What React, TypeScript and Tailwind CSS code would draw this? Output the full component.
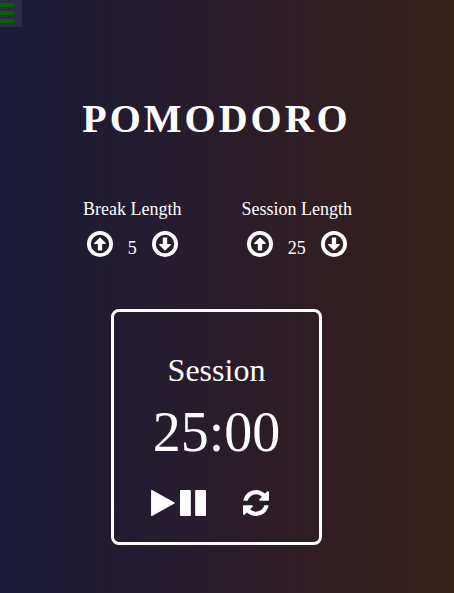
import { useEffect, useState } from "react";

const ICONS = {
  up: {
    box: "128 128 1536 1536",
    size: "w-[26px]",
    path: "M896 352a544 544 0 1 0 0 1088a544 544 0 0 0 0-1088zM896 128a768 768 0 1 1 0 1536a768 768 0 0 1 0-1536zM1248 864q0-14-10-24l-319-319q-10-9-23-9t-23 9l-320 320q-9 9-9 23 0 13 9.500 22.500t22.500 9.500h192v352q0 13 9.500 22.500t22.500 9.500h192q13 0 22.500-9.500t9.500-22.500v-352h192q14 0 23-9t9-23z",
  },
  down: {
    box: "128 128 1536 1536",
    size: "w-[26px]",
    path: "M896 352a544 544 0 1 0 0 1088a544 544 0 0 0 0-1088zM896 128a768 768 0 1 1 0 1536a768 768 0 0 1 0-1536zM1248 928q0 14-10 24l-319 319q-10 9-23 9t-23-9l-320-320q-9-9-9-23 0-13 9.500-22.500t22.500-9.500h192v-352q0-13 9.500-22.500t22.500-9.500h192q13 0 22.500 9.500t9.500 22.500v352h192q14 0 23 9t9 23z",
  },
  play: {
    box: "192 128 1408 1536",
    size: "w-6",
    path: "M1576 927l-1328 738q-23 13-39.500 3t-16.500-36v-1472q0-26 16.500-36t39.500 3l1328 738q23 13 23 31t-23 31z",
  },
  pause: {
    box: "128 128 1536 1536",
    size: "w-[26px]",
    path: "M1664 192v1408q0 26-19 45t-45 19h-512q-26 0-45-19t-19-45v-1408q0-26 19-45t45-19h512q26 0 45 19t19 45zm-896 0v1408q0 26-19 45t-45 19h-512q-26 0-45-19t-19-45v-1408q0-26 19-45t45-19h512q26 0 45 19t19 45z",
  },
  refresh: {
    box: "128 128 1536 1536",
    size: "w-[26px]",
    path: "M1639 1056q0 5-1 7-64 268-268 434.500t-478 166.500q-146 0-282.500-55t-243.500-157l-129 129q-19 19-45 19t-45-19-19-45v-448q0-26 19-45t45-19h448q26 0 45 19t19 45-19 45l-137 137q71 66 161 102t187 36q134 0 250-65t186-179q11-17 53-117 8-23 30-23h192q13 0 22.500 9.500t9.500 22.500zm25-800v448q0 26-19 45t-45 19h-448q-26 0-45-19t-19-45 19-45l138-138q-148-137-349-137-134 0-250 65t-186 179q-11 17-53 117-8 23-30 23h-199q-13 0-22.500-9.500t-9.500-22.500v-7q65-268 270-434.500t480-166.500q146 0 284 55.500t245 156.500l130-129q19-19 45-19t45 19 19 45z",
  },
};

function Icon({ name }: { name: keyof typeof ICONS }) {
  const { box, size, path } = ICONS[name];
  return (
    <svg viewBox={box} className={`block h-[26px] overflow-visible ${size}`} fill="currentColor" aria-hidden="true">
      <path fillRule="evenodd" d={path} />
    </svg>
  );
}

type LengthProps = { label: string; value: number; onChange: (value: number) => void };

function LengthControl({ label, value, onChange }: LengthProps) {
  return (
    <section className="flex flex-col items-center gap-2.5" aria-label={label}>
      <h2 className="text-lg leading-6">{label}</h2>
      <div className="flex items-start gap-[15px]">
        <button type="button" aria-label={`Increase ${label}`} onClick={() => onChange(Math.min(60, value + 1))}>
          <Icon name="up" />
        </button>
        <span className="pt-[5px] text-lg leading-6">{value}</span>
        <button type="button" aria-label={`Decrease ${label}`} onClick={() => onChange(Math.max(1, value - 1))}>
          <Icon name="down" />
        </button>
      </div>
    </section>
  );
}

export default function App() {
  const [breakLength, setBreakLength] = useState(5);
  const [sessionLength, setSessionLength] = useState(25);
  const [seconds, setSeconds] = useState(25 * 60);
  const [running, setRunning] = useState(false);
  const [onBreak, setOnBreak] = useState(false);

  useEffect(() => {
    if (!running) return;
    const id = setInterval(() => setSeconds((s) => s - 1), 1000);
    return () => clearInterval(id);
  }, [running]);

  useEffect(() => {
    if (seconds >= 0) return;
    setSeconds((onBreak ? sessionLength : breakLength) * 60);
    setOnBreak(!onBreak);
  }, [seconds, onBreak, breakLength, sessionLength]);

  const changeSession = (value: number) => {
    setSessionLength(value);
    if (!running && !onBreak) setSeconds(value * 60);
  };

  const reset = () => {
    setRunning(false);
    setOnBreak(false);
    setBreakLength(5);
    setSessionLength(25);
    setSeconds(25 * 60);
  };

  const left = Math.max(0, seconds);
  const time = `${String(Math.floor(left / 60)).padStart(2, "0")}:${String(left % 60).padStart(2, "0")}`;

  return (
    <div className="min-h-screen bg-linear-to-r/srgb from-[#1a1a3a] to-[#381f19] font-['Liberation_Serif',serif] text-white">
      <button
        type="button"
        aria-label="Menu"
        className="flex h-[27px] w-[22px] flex-col gap-1 bg-[#2b2b45] pt-[3px]"
      >
        <span className="h-1 w-[15px] rounded-r-sm bg-[#006400]" />
        <span className="h-1 w-[15px] rounded-r-sm bg-[#006400]" />
        <span className="h-1 w-[15px] rounded-r-sm bg-[#006400]" />
      </button>
      <main className="flex flex-col items-center pt-17 pr-[21px] pb-12">
        <h1 className="text-[40px] leading-12 font-bold tracking-[3px]">POMODORO</h1>
        <div className="mt-[54px] flex justify-center gap-[60px] pl-0.5">
          <LengthControl label="Break Length" value={breakLength} onChange={setBreakLength} />
          <LengthControl label="Session Length" value={sessionLength} onChange={changeSession} />
        </div>
        <section className="mt-[49px] flex flex-col items-center rounded-lg border-3 border-white px-[37px] pt-[38px] pb-[26px]">
          <h2 className="text-[32px] leading-10">{onBreak ? "Break" : "Session"}</h2>
          <p className="mt-2.5 text-[56px] leading-16">{time}</p>
          <div className="mt-[26px] flex w-[131px] items-center justify-between pr-[13px]">
            <button
              type="button"
              aria-label="Start or pause"
              className="flex gap-[5px]"
              onClick={() => setRunning(!running)}
            >
              <Icon name="play" />
              <Icon name="pause" />
            </button>
            <button type="button" aria-label="Reset" onClick={reset}>
              <Icon name="refresh" />
            </button>
          </div>
        </section>
      </main>
    </div>
  );
}
